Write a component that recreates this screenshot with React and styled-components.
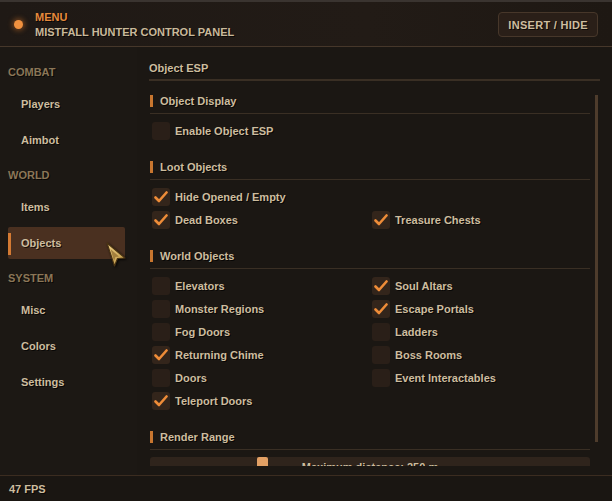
import React from 'react';
import styled, { createGlobalStyle } from 'styled-components';

const GlobalStyle = createGlobalStyle`
  html, body {
    margin: 0;
    padding: 0;
    background: #1b1713;
  }
  body {
    font-family: "Liberation Sans", Arial, sans-serif;
    font-size: 11px;
    font-weight: bold;
    color: #cdbd9f;
    text-shadow: 1px 1px 0 rgba(0, 0, 0, 0.7);
  }
`;

const Frame = styled.div`
  position: relative;
  height: 100vh;
  display: flex;
  flex-direction: column;
  overflow: hidden;
  background: #1b1713;
`;

const Header = styled.header`
  height: 44px;
  flex-shrink: 0;
  display: flex;
  align-items: center;
  justify-content: space-between;
  padding: 0 14px 0 14px;
  border-top: 2px solid #3a3430;
  border-bottom: 1px solid #46372a;
  background: linear-gradient(90deg, #1f1915 0%, #221b16 60%, #1e1813 100%);
`;

const Brand = styled.div`
  display: flex;
  align-items: center;
  gap: 12px;
`;

const Dot = styled.span`
  width: 9px;
  height: 9px;
  border-radius: 50%;
  background: #f0913f;
  box-shadow: 0 0 5px 2px rgba(200, 110, 40, 0.45);
`;

const BrandText = styled.div`
  display: flex;
  flex-direction: column;
  line-height: 15px;
  padding-top: 1px;
`;

const MenuTitle = styled.span`
  color: #e68a3c;
`;

const PanelTitle = styled.span`
  color: #c9b99a;
`;

const HideButton = styled.div`
  height: 23px;
  display: flex;
  align-items: center;
  padding: 0 9px;
  border: 1px solid #47372a;
  border-radius: 4px;
  background: #2a1f18;
  letter-spacing: 0.3px;
  color: #cdbd9f;
  margin-top: 1px;
`;

const Body = styled.div`
  flex: 1;
  display: flex;
  min-height: 0;
`;

const Sidebar = styled.nav`
  width: 137px;
  flex-shrink: 0;
  display: flex;
  flex-direction: column;
  padding: 10px 12px 0 8px;
  box-sizing: border-box;
  background: #1c1814;
`;

const Group = styled.div`
  display: flex;
  flex-direction: column;
`;

const GroupLabel = styled.div`
  height: 20px;
  line-height: 20px;
  margin: 5px 0 6px;
  color: #8b7657;
`;

const NavItem = styled.div`
  position: relative;
  height: 32px;
  line-height: 32px;
  padding-left: 13px;
  margin-bottom: 4px;
  border-radius: 2px;
  background: ${(p) => (p.active ? '#4a3020' : 'transparent')};
  color: #cdbd9f;

  &::before {
    content: '';
    display: ${(p) => (p.active ? 'block' : 'none')};
    position: absolute;
    left: 0;
    top: 6px;
    bottom: 4px;
    width: 3px;
    background: #d47a33;
  }
`;

const Main = styled.main`
  flex: 1;
  display: flex;
  flex-direction: column;
  padding: 13px 12px 8px 12px;
  min-width: 0;
`;

const PageTitle = styled.div`
  line-height: 16px;
  padding-bottom: 3px;
  border-bottom: 2px solid #3a2f24;
  margin-bottom: 12px;
`;

const PanelWrap = styled.div`
  position: relative;
  height: 373px;
`;

const ScrollPanel = styled.div`
  height: 100%;
  overflow: hidden;
  padding: 0 10px 0 1px;
  box-sizing: border-box;
`;

const ScrollThumb = styled.div`
  position: absolute;
  right: 2px;
  top: 2px;
  width: 3px;
  height: 347px;
  background: #4e3c2c;
`;

const Section = styled.section`
  margin-bottom: 18px;
  &:last-child {
    margin-bottom: 0;
  }
`;

const SectionHeader = styled.div`
  display: flex;
  align-items: center;
  gap: 7px;
  line-height: 16px;
  padding-bottom: 4px;
  border-bottom: 1px solid #3a2f24;
  margin-bottom: 7px;

  &::before {
    content: '';
    width: 3px;
    height: 12px;
    background: #c8762f;
  }
`;

const Grid = styled.div`
  display: grid;
  grid-template-columns: 1fr 1fr;
  row-gap: 3px;
`;

const Row = styled.label`
  grid-column: ${(p) => p.col || 'auto'};
  height: 20px;
  display: flex;
  align-items: center;
  gap: 5px;
  padding-left: 2px;
`;

const Box = styled.span`
  width: 18px;
  height: 18px;
  border-radius: 3px;
  background: ${(p) => (p.checked ? '#33251b' : '#2a1f18')};
  display: flex;
  align-items: center;
  justify-content: center;
`;

const SliderFrame = styled.div`
  position: relative;
  height: 20px;
  line-height: 20px;
  border-radius: 3px;
  background: #2f241c;
  text-align: center;
  color: #cdbd9f;
`;

const Grab = styled.span`
  position: absolute;
  top: 0;
  width: 11px;
  height: 16px;
  border-radius: 2px;
  background: #e2a065;
`;

const Footer = styled.footer`
  height: 25px;
  flex-shrink: 0;
  display: flex;
  align-items: center;
  padding-left: 9px;
  border-top: 1px solid #3b2c20;
  background: #1a1612;
  color: #cdbd9f;
`;

const Cursor = styled.svg`
  position: absolute;
  left: 105px;
  top: 241px;
  filter: drop-shadow(1px 1px 1px rgba(0, 0, 0, 0.8));
`;

const Check = () => (
  <svg width="14" height="12" viewBox="0 0 14 12">
    <path d="M1.5 6.5 L5 10 L12.5 1.5" fill="none" stroke="#ee8c38" strokeWidth="2.6" strokeLinecap="round" strokeLinejoin="round" />
  </svg>
);

const Option = ({ label, checked, col }) => (
  <Row col={col}>
    <Box checked={checked}>{checked && <Check />}</Box>
    {label}
  </Row>
);

const nav = [
  { group: 'COMBAT', items: ['Players', 'Aimbot'] },
  { group: 'WORLD', items: ['Items', 'Objects'] },
  { group: 'SYSTEM', items: ['Misc', 'Colors', 'Settings'] },
];

const worldLeft = [
  ['Elevators', false],
  ['Monster Regions', false],
  ['Fog Doors', false],
  ['Returning Chime', true],
  ['Doors', false],
  ['Teleport Doors', true],
];

const worldRight = [
  ['Soul Altars', true],
  ['Escape Portals', true],
  ['Ladders', false],
  ['Boss Rooms', false],
  ['Event Interactables', false],
];

const App = () => {
  const range = 0.245;
  return (
    <Frame>
      <GlobalStyle />
      <Header>
        <Brand>
          <Dot />
          <BrandText>
            <MenuTitle>MENU</MenuTitle>
            <PanelTitle>MISTFALL HUNTER CONTROL PANEL</PanelTitle>
          </BrandText>
        </Brand>
        <HideButton>INSERT / HIDE</HideButton>
      </Header>
      <Body>
        <Sidebar>
          {nav.map((g) => (
            <Group key={g.group}>
              <GroupLabel>{g.group}</GroupLabel>
              {g.items.map((item) => (
                <NavItem key={item} active={item === 'Objects'}>
                  {item}
                </NavItem>
              ))}
            </Group>
          ))}
        </Sidebar>
        <Main>
          <PageTitle>Object ESP</PageTitle>
          <PanelWrap>
            <ScrollPanel>
              <Section>
                <SectionHeader>Object Display</SectionHeader>
                <Grid>
                  <Option label="Enable Object ESP" />
                </Grid>
              </Section>
              <Section>
                <SectionHeader>Loot Objects</SectionHeader>
                <Grid>
                  <Option label="Hide Opened / Empty" checked col="1" />
                  <Option label="Dead Boxes" checked col="1" />
                  <Option label="Treasure Chests" checked col="2" />
                </Grid>
              </Section>
              <Section>
                <SectionHeader>World Objects</SectionHeader>
                <Grid>
                  {worldLeft.map(([label, checked], i) => (
                    <React.Fragment key={label}>
                      <Option label={label} checked={checked} />
                      {worldRight[i] ? (
                        <Option label={worldRight[i][0]} checked={worldRight[i][1]} />
                      ) : (
                        <span />
                      )}
                    </React.Fragment>
                  ))}
                </Grid>
              </Section>
              <Section>
                <SectionHeader>Render Range</SectionHeader>
                <SliderFrame>
                  <Grab style={{ left: `calc(${range * 100}% - 1px)` }} />
                  Maximum distance: 250 m
                </SliderFrame>
              </Section>
            </ScrollPanel>
            <ScrollThumb />
          </PanelWrap>
        </Main>
      </Body>
      <Footer>47 FPS</Footer>
      <Cursor width="22" height="28" viewBox="0 0 22 28">
        <defs>
          <linearGradient id="cur" x1="0" y1="0" x2="1" y2="1">
            <stop offset="0" stopColor="#f2d48a" />
            <stop offset="1" stopColor="#b8903e" />
          </linearGradient>
        </defs>
        <path d="M2 2 L20 17 L12.5 17.5 L9.5 25 Z" fill="url(#cur)" stroke="#4a3414" strokeWidth="1.2" strokeLinejoin="round" />
        <path d="M5.5 8 L14 15.5 L10.5 16 L9 20 Z" fill="#8d6a2c" opacity="0.7" />
      </Cursor>
    </Frame>
  );
};

export default App;
